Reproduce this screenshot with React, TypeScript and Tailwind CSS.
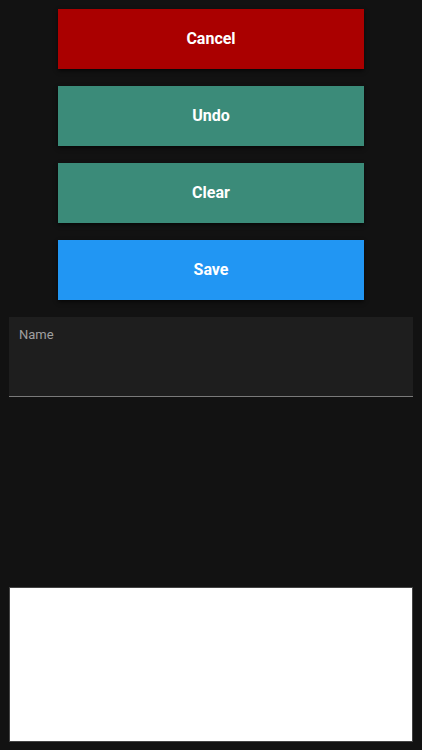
const buttons = [
  { label: 'Cancel', className: 'bg-[#aa0000]' },
  { label: 'Undo', className: 'bg-[#3b8b79]' },
  { label: 'Clear', className: 'bg-[#3b8b79]' },
  { label: 'Save', className: 'bg-[#2196f3]' },
];

export default function App() {
  return (
    <div className="min-h-[750px] bg-[#121212] px-[9px] pt-[9px] font-['Roboto',sans-serif]">
      <div className="flex flex-col items-center gap-[17px]">
        {buttons.map((b) => (
          <button
            key={b.label}
            className={`h-[60px] w-[306px] ${b.className} text-[16px] font-bold text-white shadow-[0_2px_4px_rgba(0,0,0,0.6)]`}
          >
            {b.label}
          </button>
        ))}
      </div>

      <div className="mt-[17px] h-[80px] border-b border-[#7a7a7a] bg-[#1e1e1e] px-[10px] pt-[11px]">
        <span className="block text-[13px] leading-none text-[#a0a0a0]">Name</span>
      </div>

      <div className="mt-[190px] h-[155px] border border-[#444] bg-white" />
    </div>
  );
}
